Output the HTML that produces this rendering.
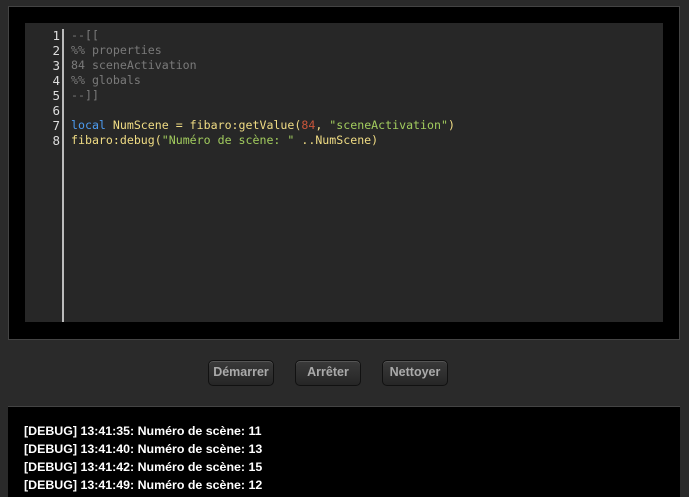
<!DOCTYPE html>
<html><head><meta charset="utf-8"><style>
body{margin:0;width:689px;height:494px;background:#2a2a2a;position:relative;overflow:hidden;font-family:"Liberation Sans",sans-serif}
#outer{position:absolute;left:8px;top:6px;width:670px;height:332px;background:#000;border:1px solid #444}
#ed{position:absolute;left:16px;top:16px;width:638px;height:299px;background:#272727}
#gut{position:absolute;left:37px;top:6px;width:2px;height:293px;background:#bbb}
.code{position:absolute;top:5px;font-family:"DejaVu Sans Mono",monospace;font-size:11.6px;line-height:15px;white-space:pre}
#nums{left:0;width:35px;text-align:right;color:#ddd;font-size:12.5px}
#src{left:46px;color:#f0dc84}
.c{color:#7a7a7a}.k{color:#4c9bf0}.n{color:#c8553a}.s{color:#a2cc5e}
.btn{position:absolute;top:360px;width:64px;height:24px;border:1px solid #111;border-radius:5px;background:linear-gradient(#3a3a3a,#262626);color:#aaa;font-size:12.5px;font-weight:bold;text-align:center;line-height:23px;box-shadow:inset 0 1px 0 #555}
#con{position:absolute;left:8px;top:406px;width:672px;height:90px;background:#000;border-top:1px solid #444}
.d{position:absolute;left:16px;color:#fff;font-size:12.4px;font-weight:bold}
</style></head><body>
<div id="outer"><div id="ed">
<div id="gut"></div>
<div class="code" id="nums">1
2
3
4
5
6
7
8</div>
<div class="code" id="src"><span class="c">--[[
%% properties
84 sceneActivation
%% globals
--]]</span>

<span class="k">local</span> NumScene = fibaro:getValue(<span class="n">84</span>, <span class="s">"sceneActivation"</span>)
fibaro:debug(<span class="s">"Numéro de scène: "</span> ..NumScene)</div>
</div></div>
<div class="btn" style="left:208px">Démarrer</div>
<div class="btn" style="left:295px">Arrêter</div>
<div class="btn" style="left:382px">Nettoyer</div>
<div id="con">
<div class="d" style="top:17px">[DEBUG] 13:41:35: Numéro de scène: 11</div>
<div class="d" style="top:35px">[DEBUG] 13:41:40: Numéro de scène: 13</div>
<div class="d" style="top:53px">[DEBUG] 13:41:42: Numéro de scène: 15</div>
<div class="d" style="top:71px">[DEBUG] 13:41:49: Numéro de scène: 12</div>
</div>
</body></html>
